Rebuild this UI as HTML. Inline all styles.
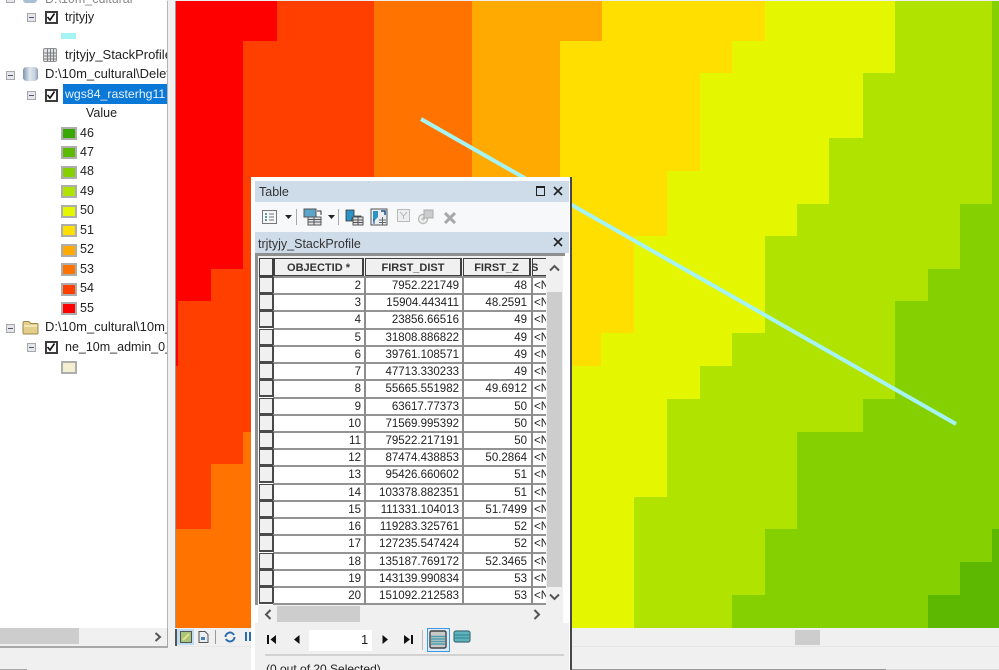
<!DOCTYPE html>
<html><head><meta charset="utf-8"><style>
html,body{margin:0;padding:0;width:999px;height:670px;overflow:hidden;background:#f0f0f0;font-family:"Liberation Sans",sans-serif;color:#222}
div,span,svg{position:absolute}
.t{font-size:12.5px;line-height:16px;white-space:nowrap;height:16px;overflow:hidden;filter:blur(.35px)}
.sw{left:61px;width:12px;height:9px;border:2px solid #adadad}
.cb{left:45px;width:9px;height:9px;border:2px solid #3c3c3c;background:#fff}
.ex{width:7px;height:7px;border:1px solid #a8a8a8;background:#e4e6ee}
.ex::after{content:"";position:absolute;left:1px;top:3px;width:5px;height:1px;background:#556}
.r{left:259px;width:287px;height:18px;font-size:11.5px;line-height:17px;filter:blur(.3px)}
.r::before{content:"";position:absolute;left:14px;top:-1px;width:273px;height:2px;background:#939393}
.rh{left:0;top:0;width:12px;height:14px;border:1px solid #4a4a4a;border-width:1px 2px 2px 1px;background:#f0f0f0}
.a,.b,.c{top:1px;text-align:right;white-space:nowrap}
.a{left:16px;width:86px}.b{left:107px;width:93px}.c{left:206px;width:62px}
.d{left:275px;top:1px;width:12px;overflow:hidden;white-space:nowrap}
.h{top:258px;height:16px;background:#f0f0f0;border:1px solid #3f3f3f;border-width:1px 2px 2px 1px;font-size:11px;font-weight:bold;line-height:18px;text-align:center;white-space:nowrap;overflow:hidden;color:#333;filter:blur(.3px)}
</style></head><body>

<svg style="left:176px;top:1px" width="823" height="627" viewBox="176 1 823 627" shape-rendering="crispEdges">
<rect x="176" y="1" width="823" height="627" fill="#ff0000"/>
<polygon fill="#ff3f00" points="277,1 999,1 999,628 176,628 176,366 178,366 178,301 211,301 211,269 243,269 243,41 277,41"/>
<polygon fill="#ff7300" points="374,1 999,1 999,628 176,628 176,529 211,529 211,464 243,464 243,432 300,432 300,180 374,180"/>
<polygon fill="#ffaa00" points="472,1 999,1 999,628 500,628 500,180 472,180"/>
<polygon fill="#ffdf00" points="602,1 999,1 999,628 560,628 560,41 602,41"/>
<polygon fill="#e4f700" points="765,1 999,1 999,628 571,628 571,366 601,366 601,333 634,333 634,236 667,236 667,171 700,171 700,73 732,73 732,41 765,41"/>
<polygon fill="#b0e300" points="895,1 999,1 999,628 634,628 634,497 667,497 667,399 700,399 700,366 732,366 732,333 765,333 765,236 797,236 797,204 829,204 829,138 863,138 863,73 895,73"/>
<polygon fill="#85d000" points="992,1 999,1 999,628 732,628 732,595 765,595 765,529 797,529 797,432 863,432 863,399 895,399 895,301 928,301 928,269 960,269 960,204 992,204"/>
<polygon fill="#5cb800" points="992,529 999,529 999,628 928,628 928,595 960,595 960,562 992,562"/>
<line x1="421" y1="119" x2="956" y2="424" stroke="#a5f3f3" stroke-width="4" shape-rendering="auto"/>
</svg>

<!-- divider -->
<div style="left:167px;top:0;width:9px;height:646px;background:#f0f0f0"></div>
<div style="left:167px;top:0;width:1px;height:646px;background:#b5b5b5"></div>
<div style="left:175px;top:0;width:1px;height:628px;background:#9a9a9a"></div>
<div style="left:0;top:0;width:999px;height:1px;background:#eee"></div>

<!-- sidebar -->
<div style="left:0;top:0;width:167px;height:628px;background:#fff;overflow:hidden">
<div class="ex" style="left:6px;top:-6px"></div>
<div style="left:23px;top:-8px;width:14px;height:11px;background:#a9bfd2;border-radius:3px"></div>
<div class="t" style="left:45px;top:-9px;color:#888">D:\10m_cultural</div>

<div class="ex" style="left:27px;top:13px"></div>
<div class="cb" style="top:11px"></div>
<svg style="left:46px;top:12px" width="10" height="10"><path d="M1.5 5 L4 8 L8.5 1.5" fill="none" stroke="#111" stroke-width="1.6"/></svg>
<div class="t" style="left:65px;top:9px">trjtyjy</div>
<div style="left:61px;top:33px;width:15px;height:6px;background:#a5f3f3"></div>
<svg style="left:43px;top:48px" width="14" height="14"><rect x=".5" y=".5" width="13" height="13" rx="1.5" fill="#dfe3e8" stroke="#8f8f8f"/><path d="M1 5H13M1 8H13M1 11H13M4.5 1V13M7.5 1V13M10.5 1V13" stroke="#7d7d7d"/></svg>
<div class="t" style="left:65px;top:47px;font-size:13px">trjtyjy_StackProfile</div>

<div class="ex" style="left:6px;top:71px"></div>
<div style="left:23px;top:67px;width:15px;height:14px;border-radius:4px/3px;background:linear-gradient(90deg,#7f94ad,#dfe7ef 45%,#c4d0dd 80%,#8c9bb0)"></div>
<div class="t" style="left:45px;top:66px;font-size:13px">D:\10m_cultural\Delete</div>

<div class="ex" style="left:27px;top:91px"></div>
<div class="cb" style="top:89px"></div>
<svg style="left:46px;top:90px" width="10" height="10"><path d="M1.5 5 L4 8 L8.5 1.5" fill="none" stroke="#111" stroke-width="1.6"/></svg>
<div style="left:63px;top:84px;width:104px;height:20px;background:#0a78d7"></div>
<div class="t" style="left:65px;top:86px;color:#e8f2ff;font-size:12.3px">wgs84_rasterhg11</div>
<div class="t" style="left:86px;top:105px">Value</div>

<div class="sw" style="top:127px;background:#38a800"></div><div class="t" style="left:80px;top:125px">46</div>
<div class="sw" style="top:146px;background:#5cb800"></div><div class="t" style="left:80px;top:144px">47</div>
<div class="sw" style="top:166px;background:#85d000"></div><div class="t" style="left:80px;top:163px">48</div>
<div class="sw" style="top:185px;background:#b0e300"></div><div class="t" style="left:80px;top:183px">49</div>
<div class="sw" style="top:205px;background:#e4f700"></div><div class="t" style="left:80px;top:202px">50</div>
<div class="sw" style="top:224px;background:#ffdf00"></div><div class="t" style="left:80px;top:222px">51</div>
<div class="sw" style="top:244px;background:#ffaa00"></div><div class="t" style="left:80px;top:241px">52</div>
<div class="sw" style="top:263px;background:#ff7300"></div><div class="t" style="left:80px;top:261px">53</div>
<div class="sw" style="top:283px;background:#ff3f00"></div><div class="t" style="left:80px;top:280px">54</div>
<div class="sw" style="top:302px;background:#ff0000"></div><div class="t" style="left:80px;top:300px">55</div>

<div class="ex" style="left:6px;top:324px"></div>
<svg style="left:22px;top:320px" width="17" height="15"><path d="M1 3 Q1 1.5 2.5 1.5 H7 L8.5 3.5 H15 Q16 3.5 16 4.5 V13 Q16 14 15 14 H2 Q1 14 1 13Z" fill="#e3cf8a" stroke="#9c8a4a"/><path d="M2 6H15" stroke="#f7edc4" stroke-width="1.5"/></svg>
<div class="t" style="left:45px;top:319px;font-size:13px">D:\10m_cultural\10m_</div>

<div class="ex" style="left:27px;top:343px"></div>
<div class="cb" style="top:341px"></div>
<svg style="left:46px;top:342px" width="10" height="10"><path d="M1.5 5 L4 8 L8.5 1.5" fill="none" stroke="#111" stroke-width="1.6"/></svg>
<div class="t" style="left:65px;top:339px">ne_10m_admin_0_</div>
<div class="sw" style="top:361px;background:#f5efd2"></div>
</div>

<!-- sidebar scrollbar -->
<div style="left:0;top:628px;width:168px;height:17px;background:#f0f0f0"></div>
<div style="left:0;top:628px;width:79px;height:16px;background:#cdcdcd"></div>
<svg style="left:153px;top:632px" width="10" height="10"><path d="M2.5 1 L7 5 L2.5 9" fill="none" stroke="#555" stroke-width="2"/></svg>
<div style="left:0;top:646px;width:168px;height:1.5px;background:#a8a8a8"></div>
<div style="left:167px;top:628px;width:1px;height:19px;background:#a8a8a8"></div>
<div style="left:0;top:668.5px;width:27px;height:1.5px;background:#a8a8a8"></div>

<!-- map toolbar -->
<div style="left:176px;top:628px;width:395px;height:18px;background:#f0f0f0"></div>
<div style="left:176px;top:629px;width:18px;height:16px;background:#bfdcf5"></div>
<div style="left:175px;top:629px;width:1.5px;height:17px;background:#555"></div>
<svg style="left:180px;top:631px" width="12" height="12"><rect x=".5" y=".5" width="11" height="11" fill="#a8c47a" stroke="#555"/><path d="M3 9 L9 3" stroke="#e8e08a" stroke-width="2"/></svg>
<svg style="left:198px;top:631px" width="11" height="12"><path d="M1 .5H7L10 3.5V11.5H1Z" fill="#e8eef4" stroke="#555"/><path d="M3 6H7V9H3Z" fill="#4a7fb5"/></svg>
<div style="left:215px;top:630px;width:1px;height:14px;background:#999"></div>
<svg style="left:224px;top:631px" width="12" height="12"><path d="M1.5 6A4.5 4.5 0 0 1 10 4M10.5 6A4.5 4.5 0 0 1 2 8" fill="none" stroke="#2b6cb0" stroke-width="2"/></svg>
<div style="left:245px;top:632px;width:2px;height:9px;background:#2b6cb0"></div>
<div style="left:249px;top:632px;width:2px;height:9px;background:#2b6cb0"></div>
<div style="left:572px;top:628px;width:427px;height:18px;background:#f0f0f0"></div>
<div style="left:795px;top:630px;width:25px;height:15px;background:#cdcdcd"></div>
<div style="left:176px;top:646px;width:823px;height:1px;background:#e6e6e6"></div>
<div style="left:886px;top:669px;width:113px;height:1px;background:#ddd"></div>
<div style="left:572px;top:669px;width:314px;height:1px;background:#999"></div>

<!-- table window -->
<div style="left:251px;top:177px;width:319px;height:493px;background:#fff"></div>
<div style="left:570px;top:177px;width:2px;height:493px;background:#484848"></div>
<div style="left:255px;top:181px;width:314px;height:21px;background:#cedcea"></div>
<div class="t" style="left:259px;top:184px;color:#333">Table</div>
<div style="left:536px;top:186px;width:7px;height:7px;border:1.5px solid #222;border-top-width:2px"></div>
<svg style="left:553px;top:186px" width="10" height="10"><path d="M1 1L9 9M9 1L1 9" stroke="#222" stroke-width="1.6"/></svg>

<div style="left:255px;top:202px;width:314px;height:30px;background:#f7f8f9"></div>
<svg style="left:262px;top:209px" width="16" height="16"><rect x=".5" y="1.5" width="14" height="13" fill="#f4f6f8" stroke="#777"/><path d="M3 5H5M3 8H5M3 11H5" stroke="#2f7f7f" stroke-width="1.4"/><path d="M7 5H12M7 8H12M7 11H12" stroke="#777"/></svg>
<svg style="left:285px;top:215px" width="7" height="5"><path d="M0 0H7L3.5 4Z" fill="#222"/></svg>
<div style="left:296px;top:209px;width:1px;height:16px;background:#aaa"></div>
<svg style="left:303px;top:208px" width="20" height="18"><rect x="1" y="1" width="12" height="8" fill="#5ba5c9" stroke="#555"/><rect x="5" y="9" width="13" height="8" fill="#dfe3e8" stroke="#555"/><path d="M5 11.5H18M5 14H18M11 9V17" stroke="#555"/><path d="M14 3H18V7" fill="none" stroke="#333"/></svg>
<svg style="left:328px;top:215px" width="7" height="5"><path d="M0 0H7L3.5 4Z" fill="#222"/></svg>
<div style="left:338px;top:209px;width:1px;height:16px;background:#aaa"></div>
<svg style="left:345px;top:209px" width="19" height="17"><path d="M1 1H9V7H16V9H7V12H1Z" fill="#2d93c4" stroke="#333" stroke-width=".8"/><rect x="8" y="8" width="10" height="8" fill="#dfe3e8" stroke="#555"/><path d="M8 11H18M8 13.5H18M13 8V16" stroke="#555"/></svg>
<svg style="left:370px;top:208px" width="18" height="18"><rect x="1" y="1" width="16" height="16" fill="#e8eef4" stroke="#555"/><path d="M3 3H8V9L3 14Z" fill="#2d93c4"/><path d="M9 12H16M9 14.5H16M12.5 9V17" stroke="#666"/><path d="M11 3L15 3L15 7" fill="none" stroke="#1c4f8a" stroke-width="1.5"/><path d="M4 16V11" stroke="#1c4f8a"/></svg>
<svg style="left:397px;top:209px" width="13" height="13"><rect x=".5" y=".5" width="12" height="12" fill="#eee" stroke="#bbb"/><path d="M3 3L6.5 7L10 3M6.5 7V10" fill="none" stroke="#bbb"/></svg>
<svg style="left:417px;top:209px" width="17" height="16"><circle cx="6" cy="10" r="4.5" fill="#f0f0f0" stroke="#bbb" stroke-width="1.4"/><rect x="7" y="1" width="9" height="8" fill="#ccc" stroke="#aaa"/><path d="M4 10H8M6 8V12" stroke="#bbb"/></svg>
<svg style="left:444px;top:212px" width="12" height="12"><path d="M1 1L11 11M11 1L1 11" stroke="#a8a8a8" stroke-width="3"/></svg>

<div style="left:255px;top:232px;width:314px;height:21px;background:#cedcea"></div>
<div class="t" style="left:258px;top:236px;color:#333">trjtyjy_StackProfile</div>
<svg style="left:553px;top:237px" width="10" height="10"><path d="M1 1L9 9M9 1L1 9" stroke="#222" stroke-width="1.6"/></svg>

<!-- grid -->
<div style="left:255px;top:253px;width:310px;height:369px;background:#fff"></div>
<div style="left:255px;top:253px;width:310px;height:3px;background:#8f8f8f"></div>
<div style="left:255px;top:253px;width:3px;height:352px;background:#8f8f8f"></div>
<div style="left:258px;top:256px;width:288px;height:21px;background:#f0f0f0"></div>

<div class="h" style="left:259px;width:12px"></div>
<div class="h" style="left:274px;width:87px">OBJECTID *</div>
<div class="h" style="left:365px;width:94px">FIRST_DIST</div>
<div class="h" style="left:463px;width:65px">FIRST_Z</div>
<div class="h" style="left:532px;width:13px;border-right:0;text-align:left;text-indent:-2px">S</div>

<div class="r" style="top:277px"><div class="rh"></div><div class="a">2</div><div class="b">7952.221749</div><div class="c">48</div><div class="d">&lt;N</div></div>
<div class="r" style="top:294px"><div class="rh"></div><div class="a">3</div><div class="b">15904.443411</div><div class="c">48.2591</div><div class="d">&lt;N</div></div>
<div class="r" style="top:311px"><div class="rh"></div><div class="a">4</div><div class="b">23856.66516</div><div class="c">49</div><div class="d">&lt;N</div></div>
<div class="r" style="top:329px"><div class="rh"></div><div class="a">5</div><div class="b">31808.886822</div><div class="c">49</div><div class="d">&lt;N</div></div>
<div class="r" style="top:346px"><div class="rh"></div><div class="a">6</div><div class="b">39761.108571</div><div class="c">49</div><div class="d">&lt;N</div></div>
<div class="r" style="top:363px"><div class="rh"></div><div class="a">7</div><div class="b">47713.330233</div><div class="c">49</div><div class="d">&lt;N</div></div>
<div class="r" style="top:380px"><div class="rh"></div><div class="a">8</div><div class="b">55665.551982</div><div class="c">49.6912</div><div class="d">&lt;N</div></div>
<div class="r" style="top:398px"><div class="rh"></div><div class="a">9</div><div class="b">63617.77373</div><div class="c">50</div><div class="d">&lt;N</div></div>
<div class="r" style="top:415px"><div class="rh"></div><div class="a">10</div><div class="b">71569.995392</div><div class="c">50</div><div class="d">&lt;N</div></div>
<div class="r" style="top:432px"><div class="rh"></div><div class="a">11</div><div class="b">79522.217191</div><div class="c">50</div><div class="d">&lt;N</div></div>
<div class="r" style="top:449px"><div class="rh"></div><div class="a">12</div><div class="b">87474.438853</div><div class="c">50.2864</div><div class="d">&lt;N</div></div>
<div class="r" style="top:466px"><div class="rh"></div><div class="a">13</div><div class="b">95426.660602</div><div class="c">51</div><div class="d">&lt;N</div></div>
<div class="r" style="top:484px"><div class="rh"></div><div class="a">14</div><div class="b">103378.882351</div><div class="c">51</div><div class="d">&lt;N</div></div>
<div class="r" style="top:501px"><div class="rh"></div><div class="a">15</div><div class="b">111331.104013</div><div class="c">51.7499</div><div class="d">&lt;N</div></div>
<div class="r" style="top:518px"><div class="rh"></div><div class="a">16</div><div class="b">119283.325761</div><div class="c">52</div><div class="d">&lt;N</div></div>
<div class="r" style="top:535px"><div class="rh"></div><div class="a">17</div><div class="b">127235.547424</div><div class="c">52</div><div class="d">&lt;N</div></div>
<div class="r" style="top:553px"><div class="rh"></div><div class="a">18</div><div class="b">135187.769172</div><div class="c">52.3465</div><div class="d">&lt;N</div></div>
<div class="r" style="top:570px"><div class="rh"></div><div class="a">19</div><div class="b">143139.990834</div><div class="c">53</div><div class="d">&lt;N</div></div>
<div class="r" style="top:587px"><div class="rh"></div><div class="a">20</div><div class="b">151092.212583</div><div class="c">53</div><div class="d">&lt;N</div></div>
<div style="left:273px;top:603px;width:273px;height:2px;background:#939393"></div>

<!-- column lines -->
<div style="left:364px;top:277px;width:1.5px;height:328px;background:#8c8c8c"></div>
<div style="left:462px;top:277px;width:1.5px;height:328px;background:#8c8c8c"></div>
<div style="left:531px;top:277px;width:1.5px;height:328px;background:#8c8c8c"></div>

<!-- v scrollbar -->
<div style="left:546px;top:256px;width:17px;height:349px;background:#f0f0f0"></div>
<div style="left:547px;top:292px;width:15px;height:295px;background:#cdcdcd"></div>
<svg style="left:549px;top:264px" width="11" height="8"><path d="M1 6.5L5.5 2L10 6.5" fill="none" stroke="#555" stroke-width="2"/></svg>
<svg style="left:549px;top:593px" width="11" height="8"><path d="M1 1.5L5.5 6L10 1.5" fill="none" stroke="#555" stroke-width="2"/></svg>
<!-- h scrollbar -->
<div style="left:258px;top:605px;width:305px;height:18px;background:#f0f0f0"></div>
<div style="left:277px;top:606px;width:83px;height:16px;background:#cdcdcd"></div>
<svg style="left:264px;top:609px" width="8" height="11"><path d="M6.5 1L2 5.5L6.5 10" fill="none" stroke="#555" stroke-width="2"/></svg>
<svg style="left:533px;top:609px" width="8" height="11"><path d="M1.5 1L6 5.5L1.5 10" fill="none" stroke="#555" stroke-width="2"/></svg>
<!-- pager -->
<div style="left:255px;top:623px;width:314px;height:47px;background:#f0f0f0"></div>
<div style="left:309px;top:630px;width:63px;height:21px;background:#fff"></div>
<div class="t" style="left:361px;top:632px;font-size:13px">1</div>
<svg style="left:267px;top:634px" width="12" height="11"><rect x="0" y="1" width="2" height="9" fill="#111"/><path d="M9 1V10L3.5 5.5Z" fill="#111"/></svg>
<svg style="left:293px;top:634px" width="8" height="11"><path d="M6.5 1V10L1 5.5Z" fill="#111"/></svg>
<svg style="left:381px;top:634px" width="8" height="11"><path d="M1.5 1V10L7 5.5Z" fill="#111"/></svg>
<svg style="left:403px;top:634px" width="12" height="11"><path d="M1 1V10L7 5.5Z" fill="#111"/><rect x="8" y="1" width="2" height="9" fill="#111"/></svg>
<div style="left:422px;top:630px;width:1px;height:20px;background:#bbb"></div>
<div style="left:427px;top:628px;width:21px;height:22px;border:1.5px solid #3f97e6;background:#dcebf9"></div>
<svg style="left:429px;top:630px" width="19" height="20"><rect x="1" y="1" width="16" height="17" rx="1.5" fill="#c9c9c9" stroke="#444" stroke-width="1.4"/><path d="M2 6.5H16M2 9H16M2 11.5H16M2 14H16" stroke="#4a9fae" stroke-width="1.4"/></svg>
<svg style="left:453px;top:630px" width="18" height="14"><rect x="1" y="1" width="16" height="11" rx="2" fill="#5fb3bf" stroke="#3d6f78" stroke-width="1.2"/><path d="M2 5H16M2 8H16" stroke="#2f7f8c"/></svg>
<div style="left:265px;top:654px;width:299px;height:1.5px;background:#d2d2d2"></div>
<div class="t" style="left:266px;top:661px;font-size:12px;height:9px">(0 out of 20 Selected)</div>

</body></html>
